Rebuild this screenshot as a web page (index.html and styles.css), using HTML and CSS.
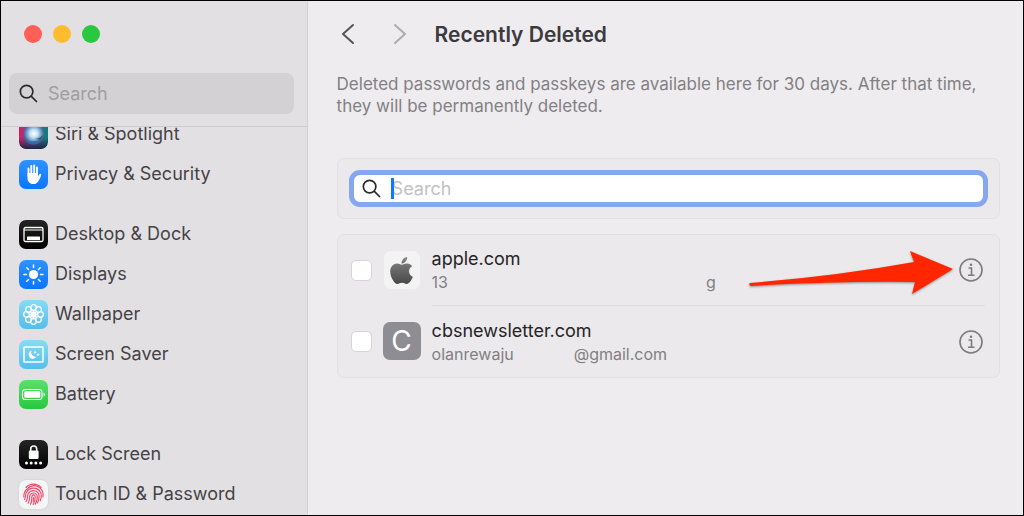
FILE: index.html
```html
<!DOCTYPE html>
<html lang="en">
<head>
    <meta charset="UTF-8">
    <meta name="viewport" content="width=device-width, initial-scale=1.0">
    <title>Recently Deleted</title>
    <link rel="stylesheet" href="styles.css">
</head>
<body>
    <div class="window">
        <aside class="sidebar">
            <div class="sidebar-top">
                <div class="lights">
                    <button class="light red" aria-label="Close"></button>
                    <button class="light yellow" aria-label="Minimize"></button>
                    <button class="light green" aria-label="Zoom"></button>
                </div>
                <label class="side-search">
                    <svg class="glass" viewBox="0 0 20 20"><circle cx="8" cy="8" r="6.6"/><path d="M13 13l5.4 5.4"/></svg>
                    <input type="text" placeholder="Search" aria-label="Search settings">
                </label>
            </div>
            <nav class="side-scroll">
                <ul class="side-list">
                    <li><a href="#">
                        <svg class="icon" viewBox="0 0 29 29">
                            <defs>
                                <linearGradient id="siri" x1="0" y1="0" x2="1" y2="0"><stop offset="0" stop-color="#d01f5c"/><stop offset=".45" stop-color="#7a4fa0"/><stop offset="1" stop-color="#0c7f74"/></linearGradient>
                                <linearGradient id="shade" x1="0" y1="0" x2="0" y2="1"><stop offset=".6" stop-color="#1c2544" stop-opacity="0"/><stop offset="1" stop-color="#1c2544"/></linearGradient>
                                <radialGradient id="orb" cx=".52" cy=".48" r=".55"><stop offset="0" stop-color="#fff"/><stop offset=".35" stop-color="#c3dff0"/><stop offset=".7" stop-color="#5b8fc0"/><stop offset="1" stop-color="#3b4f90" stop-opacity=".4"/></radialGradient>
                            </defs>
                            <rect width="29" height="29" rx="6.5" fill="url(#siri)"/>
                            <rect width="29" height="29" rx="6.5" fill="url(#shade)"/>
                            <circle cx="14.5" cy="14" r="10.5" fill="url(#orb)"/>
                            <path d="M4.500 17c3 4 6 5 10 4 4 0 8-1 9.500-3-1 4-5 6.500-9.500 6.500S5.500 22 4.500 17z" fill="#3566a5" opacity=".8"/>
                            <path d="M16 18c3 1 5 0 8-3-1 5-4 6-8 3z" fill="#2d4c52" opacity=".8"/>
                        </svg>
                        Siri &amp; Spotlight</a></li>
                    <li><a href="#">
                        <svg class="icon blue" viewBox="0 0 29 29">
                            <path d="M9.500 8.500v7M12.300 6v8M15.200 5.500v8M18 7.500v8" stroke="#fff" stroke-width="1.900" stroke-linecap="round"/>
                            <path d="M8.500 13h10.500v3.500l1.300-2.300c.6-1 2.100-.5 1.800.8-.8 3-2 5.500-3.500 7.200-1.200 1.300-2.500 1.800-4.300 1.800-3.800 0-5.800-2.500-5.800-6.500z" fill="#fff"/>
                        </svg>
                        Privacy &amp; Security</a></li>
                    <li class="group"><a href="#">
                        <svg class="icon black" viewBox="0 0 29 29">
                            <rect x="5" y="7.500" width="19" height="14" rx="1.500" fill="none" stroke="#fff" stroke-width="1.300"/>
                            <path d="M5 10h19" stroke="#fff"/>
                            <rect x="8" y="16.500" width="13" height="3.500" rx=".5" fill="#fff"/>
                        </svg>
                        Desktop &amp; Dock</a></li>
                    <li><a href="#">
                        <svg class="icon blue" viewBox="0 0 29 29">
                            <circle cx="14.500" cy="14.500" r="4.600" fill="#fff"/>
                            <path d="M14.500 5v2.500M14.500 21.500V24M5 14.500h2.500M21.500 14.500H24M7.800 7.800l1.700 1.700M19.500 19.500l1.700 1.700M7.800 21.200l1.700-1.700M19.500 9.500l1.700-1.700" stroke="#fff" stroke-width="1.500" stroke-linecap="round"/>
                        </svg>
                        Displays</a></li>
                    <li><a href="#">
                        <svg class="icon cyan" viewBox="0 0 29 29">
                            <g fill="none" stroke="#fff" stroke-width="1.300">
                                <circle cx="14.500" cy="7.500" r="2.800"/><circle cx="19.500" cy="9.500" r="2.800"/>
                                <circle cx="21.500" cy="14.500" r="2.800"/><circle cx="19.500" cy="19.500" r="2.800"/>
                                <circle cx="14.500" cy="21.500" r="2.800"/><circle cx="9.500" cy="19.500" r="2.800"/>
                                <circle cx="7.500" cy="14.500" r="2.800"/><circle cx="9.500" cy="9.500" r="2.800"/>
                                <circle cx="14.500" cy="14.500" r="2.300"/>
                                <path d="M14.500 10v9M10 14.500h9M11.300 11.300l6.400 6.400M17.700 11.300l-6.400 6.400"/>
                            </g>
                        </svg>
                        Wallpaper</a></li>
                    <li><a href="#">
                        <svg class="icon cyan" viewBox="0 0 29 29">
                            <rect x="5" y="7" width="19" height="15" rx=".5" fill="none" stroke="#fff" stroke-width="1.500"/>
                            <path d="M12.500 10.500a4.200 4.200 0 1 0 5 6 4.300 4.300 0 0 1-5-6z" fill="#fff"/>
                            <path d="M16 10.500l.5 1.200 1.200.5-1.200.5-.5 1.200-.5-1.200-1.200-.5 1.200-.5zM19 13l.5 1.200 1.200.5-1.200.5-.5 1.200-.5-1.200-1.200-.5 1.200-.5z" fill="#fff"/>
                        </svg>
                        Screen Saver</a></li>
                    <li><a href="#">
                        <svg class="icon lime" viewBox="0 0 29 29">
                            <rect x="3.500" y="9.500" width="19.500" height="10" rx="2.800" fill="none" stroke="#fff" stroke-width="1.100"/>
                            <rect x="5.300" y="11.300" width="16" height="6.400" rx="1.300" fill="#fff"/>
                            <path d="M24.500 12.800q1.600.5 1.600 1.700t-1.600 1.700z" fill="#fff"/>
                        </svg>
                        Battery</a></li>
                    <li class="group"><a href="#">
                        <svg class="icon black" viewBox="0 0 29 29">
                            <rect x="9.800" y="10.500" width="9.800" height="8.500" rx="1.300" fill="#fff"/>
                            <path d="M11.700 12V9a3 3 0 0 1 6 0v3" fill="none" stroke="#fff" stroke-width="1.600"/>
                            <g fill="#fff"><circle cx="7.500" cy="23" r="1.500"/><circle cx="12.200" cy="23" r="1.500"/><circle cx="16.900" cy="23" r="1.500"/><circle cx="21.600" cy="23" r="1.500"/></g>
                        </svg>
                        Lock Screen</a></li>
                    <li><a href="#">
                        <svg class="icon white" viewBox="0 0 29 29">
                            <g fill="none" stroke="#f0486b" stroke-width="1.150" stroke-linecap="round">
                                <path d="M7 7.500a10 10 0 0 1 15 0"/>
                                <path d="M4.800 17a10 10 0 0 1 3.500-8.200 9 9 0 0 1 15.500 8.200"/>
                                <path d="M5.500 19.500c1.500-2 .3-4.500 2-7.200a8 8 0 0 1 14 0c1 2 .8 5.500-.2 8.500"/>
                                <path d="M7 21.500c2.500-3 .5-5.500 2.500-8.200a6 6 0 0 1 10 0c1.200 2.500.4 6.500-1 9.700"/>
                                <path d="M9 23.200c2.700-4 .7-5.700 2.200-8.500a4 4 0 0 1 6.600 0c.9 2.500 0 6.500-1.600 9.500"/>
                                <path d="M11.500 24.300c2.200-4 .8-6 1.500-8.300.8-1.500 2.200-1.500 3 0 .5 2.500-.3 5.500-1.800 8.500"/>
                                <path d="M14.500 17.500c.1 1.500-.1 2.500-.4 3.800"/>
                            </g>
                        </svg>
                        Touch ID &amp; Password</a></li>
                </ul>
            </nav>
        </aside>

        <main class="content">
            <header class="toolbar">
                <button class="nav-btn" aria-label="Back"><svg viewBox="0 0 14 22"><path d="M12 2L2 11l10 9"/></svg></button>
                <button class="nav-btn next" aria-label="Forward"><svg viewBox="0 0 14 22"><path d="M2 2l10 9-10 9"/></svg></button>
                <h1>Recently Deleted</h1>
            </header>
            <p class="intro">Deleted passwords and passkeys are available here for 30 days. After that time, they will be permanently deleted.</p>

            <section class="panel search-panel">
                <label class="search-field">
                    <svg class="glass" viewBox="0 0 20 20"><circle cx="8" cy="8" r="6.600"/><path d="M13 13l5.400 5.400"/></svg>
                    <span class="field-wrap">
                        <input type="text" placeholder="Search" aria-label="Search deleted passwords">
                        <span class="caret"></span>
                    </span>
                </label>
            </section>

            <section class="panel accounts">
                <div class="account">
                    <input type="checkbox" class="check" aria-label="apple.com">
                    <div class="tile-box">
                        <span class="tile apple"><svg viewBox="0 0 384 512">
                            <defs><linearGradient id="metal" x1="0" y1="0" x2="0" y2="1"><stop offset="0" stop-color="#858585"/><stop offset="1" stop-color="#484848"/></linearGradient></defs>
                            <path fill="url(#metal)" d="M318.700 268.700c-.2-36.700 16.400-64.400 50-84.800-18.800-26.900-47.200-41.700-84.700-44.600-35.500-2.800-74.300 20.700-88.500 20.700-15 0-49.400-19.700-76.400-19.700C63.300 141.200 4 184.800 4 273.500q0 39.300 14.400 81.200c12.800 36.700 59 126.700 107.200 125.200 25.200-.6 43-17.900 75.800-17.900 31.800 0 48.300 17.900 76.400 17.900 48.600-.7 90.400-82.500 102.600-119.300-65.200-30.700-61.700-90-61.700-91.900zm-56.600-164.200c27.300-32.400 24.800-61.900 24-72.500-24.100 1.400-52 16.400-67.900 34.900-17.500 19.800-27.800 44.300-25.600 71.900 26.100 2 49.900-11.400 69.500-34.300z"/>
                        </svg></span>
                    </div>
                    <div class="account-body">
                        <div class="account-text">
                            <div class="site">apple.com</div>
                            <div class="user"><span>13</span><span class="hidden-part long"></span><span>g</span></div>
                        </div>
                        <button class="info" aria-label="Details for apple.com"><svg viewBox="0 0 24 24"><circle cx="12" cy="12" r="11"/><path d="M9.500 10h3v7M9 17.300h6.500"/><circle class="dot" cx="12" cy="6.800" r="1.300"/></svg></button>
                        <svg class="arrow" viewBox="0 0 210 52">
                            <path d="M3 35Q90 28 167 14L163 3l43 18-41 25 3-12Q90 33 4 38q-3-1-1-3z"/>
                        </svg>
                    </div>
                </div>
                <div class="account">
                    <input type="checkbox" class="check" aria-label="cbsnewsletter.com">
                    <div class="tile-box"><span class="tile letter">C</span></div>
                    <div class="account-body">
                        <div class="account-text">
                            <div class="site">cbsnewsletter.com</div>
                            <div class="user"><span>olanrewaju</span><span class="hidden-part"></span><span>@gmail.com</span></div>
                        </div>
                        <button class="info" aria-label="Details for cbsnewsletter.com"><svg viewBox="0 0 24 24"><circle cx="12" cy="12" r="11"/><path d="M9.500 10h3v7M9 17.300h6.500"/><circle class="dot" cx="12" cy="6.800" r="1.300"/></svg></button>
                    </div>
                </div>
            </section>
        </main>
    </div>
</body>
</html>
```

FILE: styles.css
```css
:root {
    --side-bg: #e3e0e3;
    --main-bg: #eeecef;
    --panel-bg: #ebe9eb;
    --line: #dedcde;
    --text: #454347;
    --muted: #828083;
}

* {
    box-sizing: border-box;
}

body {
    margin: 0;
    font-family: Inter, "Liberation Sans", sans-serif;
    color: var(--text);
    background: #000;
}

button {
    border: none;
    padding: 0;
    background: none;
    font: inherit;
}

.window {
    display: flex;
    height: 100vh;
    border: 1px solid #000;
    background: var(--main-bg);
    overflow: hidden;
}

/* sidebar */
.sidebar {
    flex: 0 0 30%;
    display: flex;
    flex-direction: column;
    background: var(--side-bg);
    border-right: 1px solid #d2cfd2;
}

.sidebar-top {
    padding: 24px 13px 12px 8px;
    border-bottom: 1px solid #cfcccf;
}

.lights {
    display: flex;
    gap: 11px;
    padding-left: 15px;
    margin-bottom: 30px;
}

.light {
    width: 18px;
    height: 18px;
    border-radius: 50%;
}

.red { background: #ff5f57; }
.yellow { background: #febc2e; }
.green { background: #28c840; }

.side-search {
    display: flex;
    align-items: center;
    gap: 10px;
    height: 41px;
    padding: 0 10px;
    border-radius: 8px;
    background: #d3d1d3;
}

.glass {
    flex: none;
    width: 19px;
    height: 19px;
    fill: none;
    stroke: #2b2a2c;
    stroke-width: 1.8;
    stroke-linecap: round;
}

input[type="text"] {
    width: 100%;
    min-width: 0;
    border: none;
    padding: 0;
    outline: none;
    background: none;
    font: inherit;
    font-size: 18px;
    color: var(--text);
}

input[type="text"]::placeholder {
    color: #a09ea1;
    opacity: 1;
}

.side-scroll {
    flex: 1;
    min-height: 0;
    overflow: hidden;
}

/* list is scrolled so the first row sits partly under the search bar */
.side-list {
    list-style: none;
    margin: -13px 0 0;
    padding: 0 18px;
}

.side-list a {
    display: flex;
    align-items: center;
    gap: 7px;
    height: 40px;
    font-size: 18px;
    line-height: 20px;
    color: var(--text);
    text-decoration: none;
}

.group {
    margin-top: 20px;
}

.icon {
    flex: none;
    width: 29px;
    height: 29px;
    border-radius: 7px;
    fill: none;
}

.blue { background: linear-gradient(#2f92ff, #0a76ff); }
.black { background: linear-gradient(#252525, #000); }
.cyan { background: linear-gradient(#85dcf7, #55bdea); }
.lime { background: linear-gradient(#5bdf6b, #27c840); }
.white { background: #f6f5f6; box-shadow: 0 0 2px #c4c1c4; }

/* main pane */
.content {
    flex: 1;
    min-width: 0;
    padding: 20px 23px 20px 29px;
}

.toolbar {
    display: flex;
    align-items: center;
    height: 26px;
    margin-bottom: 26px;
    padding-left: 4px;
}

.nav-btn {
    width: 14px;
    height: 22px;
    margin-right: 38px;
}

.nav-btn svg {
    display: block;
    fill: none;
    stroke: #565457;
    stroke-width: 2;
    stroke-linecap: round;
    stroke-linejoin: round;
}

.next {
    margin-right: 28px;
}

.next svg {
    stroke: #adabae;
}

h1 {
    margin: 0;
    font-size: 21px;
    font-weight: 600;
    color: #3c3a3d;
}

.intro {
    margin: 0 0 41px;
    font-size: 17px;
    line-height: 22px;
    color: var(--muted);
}

.panel {
    border: 1px solid #e2e0e3;
    border-radius: 7px;
    background: var(--panel-bg);
}

.search-panel {
    padding: 11px;
    margin-bottom: 15px;
}

.search-field {
    display: flex;
    align-items: center;
    gap: 11px;
    height: 37px;
    padding: 0 8px;
    border: 5px solid #84a7ef;
    border-radius: 11px;
    background: #fff;
}

.field-wrap {
    position: relative;
    flex: 1;
}

.search-field input[type="text"] {
    display: block;
}

.search-field input[type="text"]::placeholder {
    color: #c2c1c3;
}

.caret {
    position: absolute;
    left: -1px;
    top: 0;
    bottom: 0;
    width: 3px;
    background: #0a7aff;
}

.accounts {
    padding: 0 14px 0 13px;
}

.account {
    display: flex;
    align-items: center;
}

.check {
    appearance: none;
    flex: none;
    width: 21px;
    height: 21px;
    margin: 0 11px 0 0;
    border: 1px solid #d6d4d6;
    border-radius: 5px;
    background: #fff;
}

.tile-box {
    flex: none;
    display: flex;
    justify-content: center;
    width: 38px;
    margin-right: 11px;
}

.tile {
    display: flex;
    align-items: center;
    justify-content: center;
    width: 38px;
    height: 38px;
    border-radius: 7px;
}

.apple {
    width: 36px;
    background: #f4f3f4;
}

.apple svg {
    width: 23px;
    height: 31px;
}

.letter {
    background: #8e8d92;
    color: #fff;
    font-size: 28px;
}

.account-body {
    position: relative;
    flex: 1;
    display: flex;
    align-items: center;
    justify-content: space-between;
    min-width: 0;
    height: 70px;
}

.account + .account .account-body {
    height: 72px;
    border-top: 1px solid var(--line);
}

.site {
    font-size: 18px;
    line-height: 24px;
    color: #252426;
}

.user {
    display: flex;
    font-size: 16px;
    line-height: 22px;
    color: var(--muted);
}

.hidden-part {
    width: 60px;
}

.long {
    width: 258px;
}

.info {
    width: 24px;
    height: 24px;
    margin-right: 2px;
}

.info svg {
    display: block;
    fill: none;
    stroke: #7d7b7e;
    stroke-width: 1.6;
}

.info .dot {
    fill: #7d7b7e;
    stroke: none;
}

/* pointer drawn over the first row */
.arrow {
    position: absolute;
    right: 28px;
    top: 13px;
    width: 210px;
    height: 52px;
    pointer-events: none;
    filter: drop-shadow(0 1px 1px rgba(0, 0, 0, 0.4));
}

.arrow path {
    fill: #ff2600;
}
```
